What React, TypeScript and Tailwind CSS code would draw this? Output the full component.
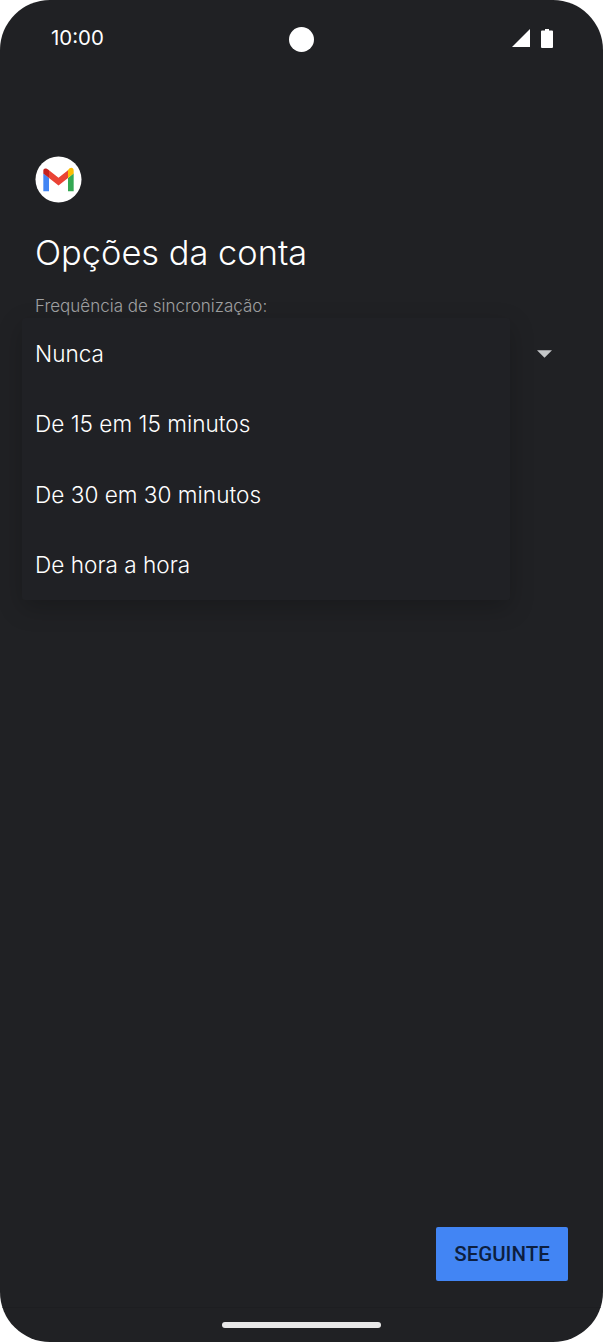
const options = ["De 15 em 15 minutos", "De 30 em 30 minutos", "De hora a hora"];

function GmailMark() {
  return (
    <svg viewBox="0 0 48 48" className="h-[47px] w-[47px]">
      <circle cx="24" cy="24" r="23.5" fill="#ffffff" />
      <path d="M8.500 36h5.800V22.500l-5.800-5v18.500z" fill="#4285f4" />
      <path d="M33.700 36h5.800V17.500l-5.800 5V36z" fill="#34a853" />
      <path d="M33.700 14.600v7.900l5.800-4.700v-2.800c0-2.900-3.300-4.500-5.800-.4z" fill="#fbbc04" />
      <path d="M14.300 22.500v-7.900L24 22.300l9.700-7.700v7.900L24 30.100l-9.700-7.600z" fill="#ea4335" />
      <path d="M8.500 15v2.800l5.800 4.700v-7.900C11.800 11.900 8.500 12.100 8.500 15z" fill="#c5221f" />
    </svg>
  );
}

export default function App() {
  return (
    <div className="h-[1342px] w-[603px] bg-white font-['Inter',sans-serif]">
      <div className="relative flex h-full flex-col overflow-hidden rounded-[50px] bg-[#202124]">
        <header className="relative flex h-[76px] shrink-0 items-center justify-between pl-[51px] pr-[50px]">
          <span className="text-[20.400px] font-normal leading-none text-white">10:00</span>
          <span className="absolute left-[289px] top-[27px] h-[25px] w-[25px] rounded-full bg-white" />
          <div className="flex items-center gap-[11px]">
            <svg viewBox="0 0 18 18" className="h-[18px] w-[18px]">
              <path d="M18 0v18H0z" fill="#ffffff" />
            </svg>
            <svg viewBox="0 0 12 19" className="h-[19px] w-[12px]">
              <path d="M4 0h4v1.500h3a1 1 0 0 1 1 1V18a1 1 0 0 1-1 1H1a1 1 0 0 1-1-1V2.500a1 1 0 0 1 1-1h3z" fill="#ffffff" />
            </svg>
          </div>
        </header>

        <main className="flex flex-1 flex-col px-[35px] pt-[80px]">
          <GmailMark />
          <h1 className="mt-[27px] text-[34.400px] font-light leading-[46px] text-white">Opções da conta</h1>
          <p className="mt-[18px] text-[17px] font-light leading-[24px] text-[#a0a1a3]">Frequência de sincronização:</p>
          <div className="mt-[12px] flex h-[48px] items-center justify-end">
            <svg viewBox="0 0 16 8" className="mr-[16px] h-[8px] w-[15px]">
              <path d="M0 0h16l-8 8z" fill="#c4c6c8" />
            </svg>
          </div>
        </main>

        <div className="flex justify-end pb-[26px] pr-[35px]">
          <button className="flex h-[54px] w-[132px] items-center justify-center rounded-[2px] bg-[#4285f4] font-['Roboto',sans-serif] text-[20.500px] font-medium text-[#0d1f40]">
            SEGUINTE
          </button>
        </div>

        <footer className="flex h-[35px] shrink-0 justify-center border-t border-[#1d1e21] pt-[14px]">
          <span className="h-[6px] w-[159px] rounded-full bg-[#e8e8e8]" />
        </footer>

        {/* Open dropdown list floats over the form */}
        <ul className="absolute left-[22px] top-[318px] h-[282px] w-[488px] rounded-[3px] bg-[#202125] pt-[0.500px] text-[22.600px] font-[350] text-white shadow-[0_8px_24px_rgba(0,0,0,0.22)]">
          <li className="flex h-[70.500px] items-center pl-[13px]">Nunca</li>
          {options.map((option) => (
            <li key={option} className="flex h-[70.500px] items-center pl-[13px]">
              {option}
            </li>
          ))}
        </ul>
      </div>
    </div>
  );
}
